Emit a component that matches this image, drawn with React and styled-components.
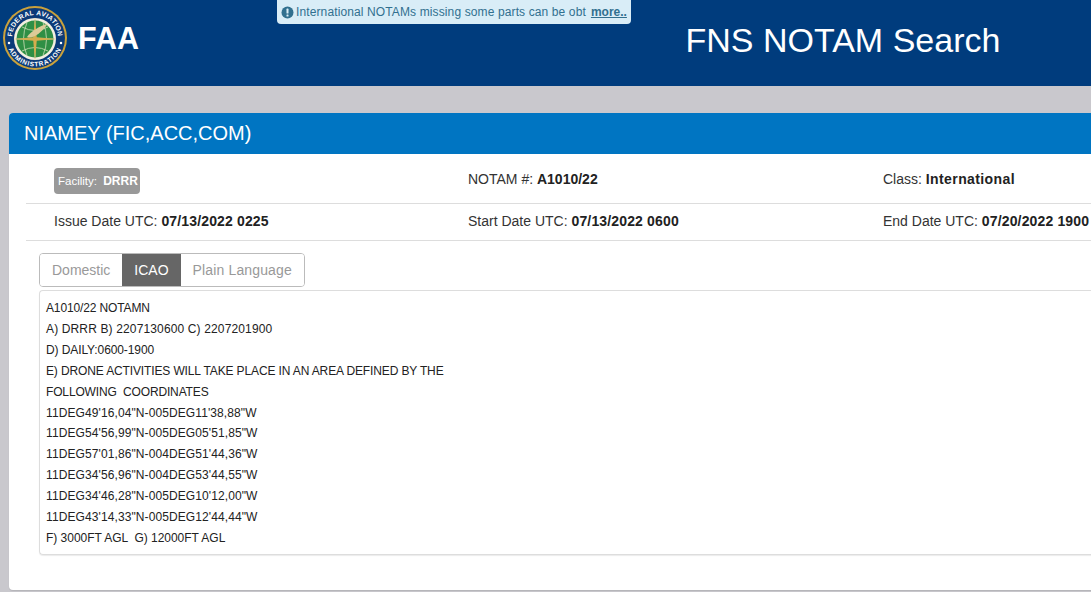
import React from "react";
import styled, { createGlobalStyle } from "styled-components";

const Global = createGlobalStyle`
  html, body { margin: 0; padding: 0; height: 592px; overflow: hidden; background: #c9c8cd; }
  body { font-family: "Liberation Sans", Arial, sans-serif; color: #222; }
`;
const Page = styled.div`width: 1091px; height: 592px; overflow: hidden; position: relative;`;
const Header = styled.header`
  height: 86px; background: #003c7d; display: flex; align-items: flex-start; color: #fff; position: relative;
`;
const Seal = styled.svg`width: 66px; height: 66px; margin: 5px 0 0 2px; flex: none;`;
const Brand = styled.div`font-size: 30.5px; font-weight: 700; line-height: 37px; margin: 20px 0 0 10px; width: 608px; flex: none;`;
const Title = styled.h1`font-size: 34px; font-weight: 400; line-height: 40px; margin: 20px 0 0 -0.5px; white-space: nowrap;`;
const Notice = styled.div`
  position: absolute; left: 277px; top: 0; width: 354px; height: 24px; box-sizing: border-box;
  background: #d9edf7; color: #31708f; border-radius: 0 0 4px 4px; font-size: 12px; line-height: 22px;
  padding-left: 4px; display: flex; align-items: center; gap: 2px; white-space: nowrap; overflow: hidden;
  letter-spacing: .12px;
  b { text-decoration: underline; margin-left: 3px; letter-spacing: 0; }
`;
const Panel = styled.section`
  margin: 27px 0 0 9px; width: 1100px; height: 477px; background: #fff; border-radius: 4px 0 0 4px;
  box-shadow: 0 1px 1px rgba(0,0,0,.1); overflow: hidden;
`;
const PanelHead = styled.h2`
  margin: 0; height: 41px; background: #0075c2; color: #fff; font-size: 20px; font-weight: 400; line-height: 41px; padding-left: 15px;
`;
const Row = styled.div`
  margin-left: 17px; height: ${p => p.$h}px; box-sizing: border-box; border-bottom: 1px solid #ddd;
  padding: ${p => p.$pad || "0 0 0 28px"}; display: grid; grid-template-columns: 414px 415px 1fr; align-items: center;
  font-size: 14px; white-space: nowrap; color: #333;
`;
const Value = styled.b`font-weight: 700; color: #222; letter-spacing: ${p => p.$ls || ".15px"};`;
const Badge = styled.span`
  display: inline-block; background: #999; color: #fff; font-size: 11.5px; line-height: 26px; height: 26px; border-radius: 4px;
  padding: 0 4px; margin: 5px 0 0 0; justify-self: start; box-sizing: border-box; width: 86px;
  b { color: #fff; margin-left: 3px; font-size: 12px; }
`;
const Tabs = styled.div`display: flex; margin: 12px 0 0 30px; width: max-content; border: 1px solid #bbb; border-radius: 4px; height: 32px; overflow: hidden;`;
const Tab = styled.div`
  font-size: 14px; line-height: 32px; padding: 0 12px; color: ${p => p.$active ? "#fff" : "#999"};
  letter-spacing: ${p => p.$ls || 0}; background: ${p => p.$active ? "#666" : "#fff"};
`;
const Body = styled.div`
  margin: 3px 0 0 30px; height: 265px; box-sizing: border-box; border: 1px solid #ddd; border-right: 0; border-radius: 4px 0 0 4px;
  box-shadow: 0 1px 1px rgba(0,0,0,.08); padding: 7px 0 0 6px; font-size: 12px; line-height: 20.9px; color: #222;
`;
const Line = styled.div`white-space: pre; letter-spacing: ${p => p.$ls}px;`;

const lines = [
  ["A1010/22 NOTAMN", -0.13],
  ["A) DRRR B) 2207130600 C) 2207201900", 0.14],
  ["D) DAILY:0600-1900", -0.1],
  ["E) DRONE ACTIVITIES WILL TAKE PLACE IN AN AREA DEFINED BY THE", -0.13],
  ["FOLLOWING  COORDINATES", -0.15],
  ["11DEG49'16,04\"N-005DEG11'38,88\"W", 0.1],
  ["11DEG54'56,99\"N-005DEG05'51,85\"W", 0.1],
  ["11DEG57'01,86\"N-004DEG51'44,36\"W", 0.1],
  ["11DEG34'56,96\"N-004DEG53'44,55\"W", 0.1],
  ["11DEG34'46,28\"N-005DEG10'12,00\"W", 0.1],
  ["11DEG43'14,33\"N-005DEG12'44,44\"W", 0.1],
  ["F) 3000FT AGL  G) 12000FT AGL", -0.02],
];

function FaaSeal() {
  return (
    <Seal viewBox="0 0 132 132">
      <defs>
        <path id="arcTop" d="M 20 66 A 46 46 0 0 1 112 66" />
        <path id="arcBot" d="M 9 66 A 57 57 0 0 0 123 66" />
      </defs>
      <circle cx="66" cy="66" r="64" fill="#c9a13c" />
      <circle cx="66" cy="66" r="60" fill="#0b3a78" />
      <circle cx="66" cy="68" r="42" fill="#f4efe0" />
      <circle cx="66" cy="68" r="37" fill="#2f8f45" />
      <path d="M29 68h74M66 31v74M40 44q26 14 52 0M40 92q26-14 52 0M50 35q-14 33 0 66M82 35q14 33 0 66" stroke="#cfe0b8" strokeWidth="1.6" fill="none" />
      <path d="M66 24l3.500 40.500L110 68l-40.500 3.500L66 112l-3.500-40.500L22 68l40.500-3.500z" fill="#d4ad4e" />
      <path d="M50 64c8-12 26-22 42-27-7 10-16 20-28 26-6 2.500-11 3-14 1z" fill="#dccb98" />
      <text fontFamily="Liberation Sans" fontSize="13.500" fontWeight="700" fill="#fff" letterSpacing=".6">
        <textPath href="#arcTop" startOffset="50%" textAnchor="middle">FEDERAL AVIATION</textPath>
      </text>
      <text fontFamily="Liberation Sans" fontSize="13" fontWeight="700" fill="#fff" letterSpacing="1.6">
        <textPath href="#arcBot" startOffset="50%" textAnchor="middle">ADMINISTRATION</textPath>
      </text>
      <circle cx="14" cy="76" r="2.500" fill="#fff" />
      <circle cx="118" cy="76" r="2.500" fill="#fff" />
    </Seal>
  );
}

function AlertIcon() {
  return (
    <svg width="13" height="13" viewBox="0 0 13 13" style={{ flex: "none" }}>
      <circle cx="6.500" cy="6.500" r="6" fill="#31708f" />
      <rect x="5.500" y="2.600" width="2" height="5" rx=".6" fill="#d9edf7" />
      <rect x="5.500" y="8.600" width="2" height="2" rx=".5" fill="#d9edf7" />
    </svg>
  );
}

export default function App() {
  return (
    <Page>
      <Global />
      <Header>
        <FaaSeal />
        <Brand>FAA</Brand>
        <Title>FNS NOTAM Search</Title>
        <Notice><AlertIcon />International NOTAMs missing some parts can be obt <b>more..</b></Notice>
      </Header>
      <Panel>
        <PanelHead>NIAMEY (FIC,ACC,COM)</PanelHead>
        <Row $h={50} $pad="0 0 0 28px">
          <Badge>Facility: <b>DRRR</b></Badge>
          <div>NOTAM #: <Value $ls="0">A1010/22</Value></div>
          <div>Class: <Value $ls=".4px">International</Value></div>
        </Row>
        <Row $h={37} $pad="0 0 2px 28px">
          <div>Issue Date UTC: <Value>07/13/2022 0225</Value></div>
          <div>Start Date UTC: <Value>07/13/2022 0600</Value></div>
          <div>End Date UTC: <Value>07/20/2022 1900</Value></div>
        </Row>
        <Tabs>
          <Tab>Domestic</Tab>
          <Tab $active>ICAO</Tab>
          <Tab $ls=".14px">Plain Language</Tab>
        </Tabs>
        <Body>
          {lines.map(([text, ls]) => <Line key={text} $ls={ls}>{text}</Line>)}
        </Body>
      </Panel>
    </Page>
  );
}
